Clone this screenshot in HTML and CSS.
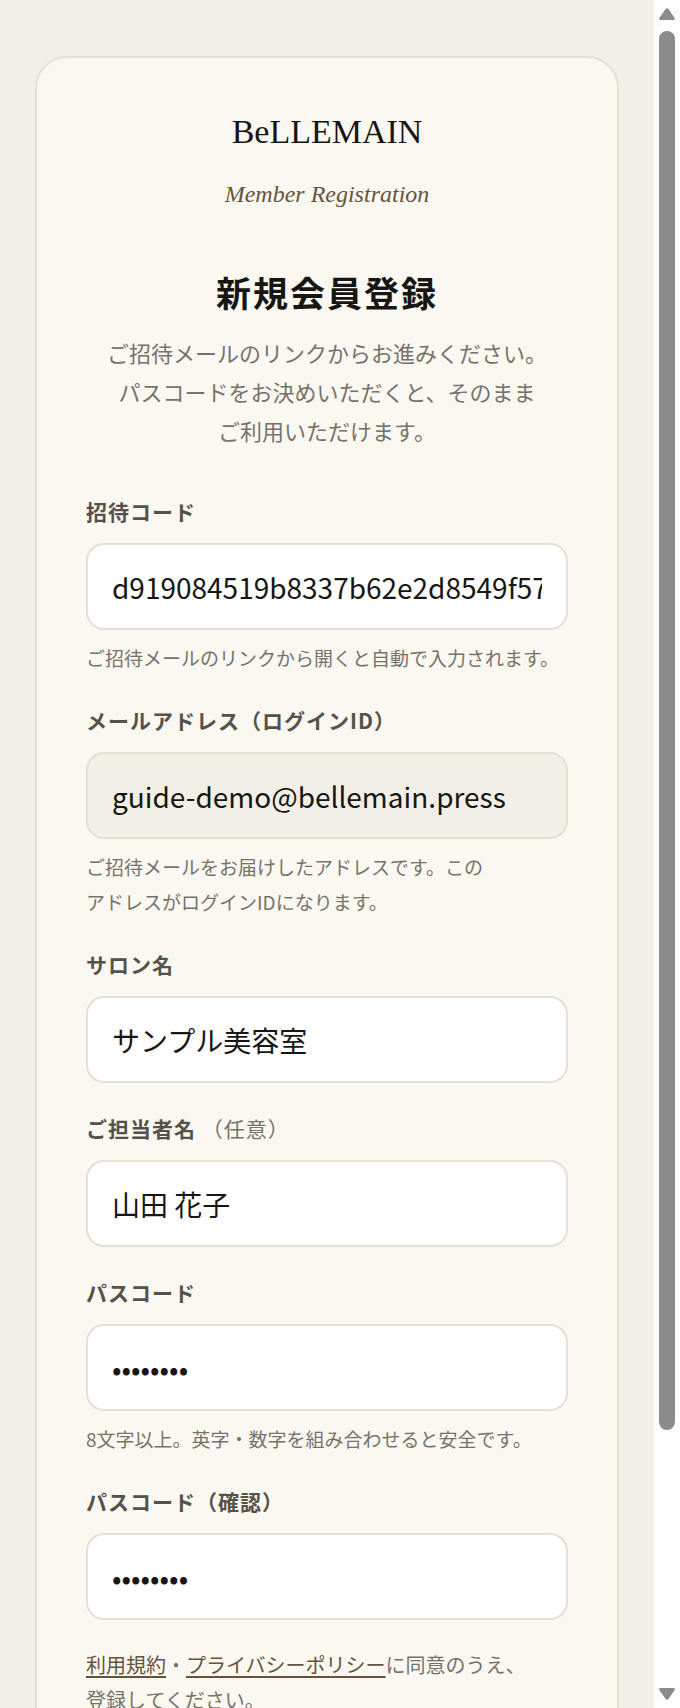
FILE: index.html
```html
<!DOCTYPE html>
<html lang="ja">

<head>
  <meta charset="UTF-8">
  <meta name="viewport" content="width=device-width, initial-scale=1.0">
  <title>新規会員登録 | BeLLEMAIN</title>
  <link rel="stylesheet" href="styles.css">
</head>

<body>

  <main class="page">
    <div class="card">
      <header class="brand">
        <div class="logo">BeLLEMAIN</div>
        <p class="tagline">Member Registration</p>
      </header>

      <h1>新規会員登録</h1>
      <p class="lead">ご招待メールのリンクからお進みください。<br>パスコードをお決めいただくと、そのまま<br>ご利用いただけます。</p>

      <form>
        <div class="field">
          <label for="code">招待コード</label>
          <input type="text" id="code" value="d919084519b8337b62e2d8549f57">
          <p class="hint">ご招待メールのリンクから開くと自動で入力されます。</p>
        </div>

        <div class="field">
          <label for="email">メールアドレス（ログインID）</label>
          <input type="email" id="email" value="guide-demo@bellemain.press" readonly>
          <p class="hint">ご招待メールをお届けしたアドレスです。この<br>アドレスがログインIDになります。</p>
        </div>

        <div class="field">
          <label for="salon">サロン名</label>
          <input type="text" id="salon" value="サンプル美容室">
        </div>

        <div class="field">
          <label for="staff">ご担当者名 <span class="optional">（任意）</span></label>
          <input type="text" id="staff" value="山田 花子">
        </div>

        <div class="field">
          <label for="pass">パスコード</label>
          <input type="password" id="pass" value="password">
          <p class="hint">8文字以上。英字・数字を組み合わせると安全です。</p>
        </div>

        <div class="field">
          <label for="pass2">パスコード（確認）</label>
          <input type="password" id="pass2" value="password">
        </div>

        <p class="terms"><a href="#terms">利用規約</a>・<a href="#privacy">プライバシーポリシー</a>に同意のうえ、<br>登録してください。</p>
      </form>
    </div>
  </main>

  <div class="scrollbar" aria-hidden="true">
    <svg width="16" height="12" viewBox="0 0 16 12"><path d="M6.6 1.1 Q8 -.6 9.4 1.1 L15.5 9.8 Q16.4 12 14.5 12 H1.5 Q-.4 12 .5 9.8Z"/></svg>
    <div class="track">
      <div class="thumb"></div>
    </div>
    <svg width="16" height="12" viewBox="0 0 16 12"><path d="M6.6 10.9 Q8 12.6 9.4 10.9 L15.5 2.2 Q16.4 0 14.5 0 H1.5 Q-.4 0 .5 2.2Z"/></svg>
  </div>

</body>

</html>
```

FILE: styles.css
```css
* {
  box-sizing: border-box;
}

body {
  display: flex;
  height: 100vh;
  margin: 0;
  overflow: hidden;
  background-color: #f2efe7;
  color: #171612;
  font-family: "Noto Sans CJK JP", "Noto Sans", sans-serif;
}

h1,
p {
  margin: 0;
}

.page {
  flex: 1;
  min-width: 0;
  padding: 56px 35px;
}

.card {
  max-width: 760px;
  margin: 0 auto;
  padding: 40px 49px 60px;
  background-color: #fbf8f1;
  border: 2px solid #e4e0d6;
  border-radius: 32px;
}

/* ロゴ */
.brand {
  text-align: center;
  font-family: "Liberation Serif", serif;
}

.logo {
  font-size: 34px;
  line-height: 68px;
}

.tagline {
  color: #66533f;
  font-size: 24px;
  font-style: italic;
  line-height: 56px;
}

h1 {
  margin-top: 45px;
  font-size: 35px;
  font-weight: 600;
  line-height: 50px;
  letter-spacing: 2px;
  text-align: center;
}

.lead {
  margin: 16px 0 43px;
  color: #77726a;
  font-size: 22px;
  line-height: 39px;
  text-align: center;
  white-space: nowrap;
}

/* 入力欄 */
.field {
  margin-bottom: 27px;
}

label {
  display: block;
  margin-bottom: 14px;
  color: #56514a;
  font-size: 21px;
  font-weight: 600;
  line-height: 36px;
  letter-spacing: 1px;
}

.optional {
  color: #77726a;
  font-weight: 400;
}

input {
  display: block;
  width: 100%;
  height: 87px;
  padding: 0 24px;
  background-color: #fff;
  border: 2px solid #e4e0d6;
  border-radius: 18px;
  color: #171612;
  font-family: inherit;
  font-size: 28px;
}

input[readonly] {
  background-color: #f2efe7;
}

.hint {
  margin-top: 10px;
  color: #77726a;
  font-size: 19px;
  line-height: 35px;
}

.terms {
  color: #77726a;
  font-size: 20px;
  line-height: 35px;
}

.terms a {
  color: #66533f;
  text-underline-offset: 3px;
}

/* スクロールバー */
.scrollbar {
  display: flex;
  flex-direction: column;
  align-items: center;
  gap: 11px;
  width: 26px;
  padding: 8px 0;
  background-color: #fdfdfd;
}

.scrollbar svg {
  flex: none;
  fill: #8b8b8b;
}

.track {
  flex: 1;
  width: 16px;
}

.thumb {
  height: 85%;
  background-color: #8b8b8b;
  border-radius: 8px;
}
```
